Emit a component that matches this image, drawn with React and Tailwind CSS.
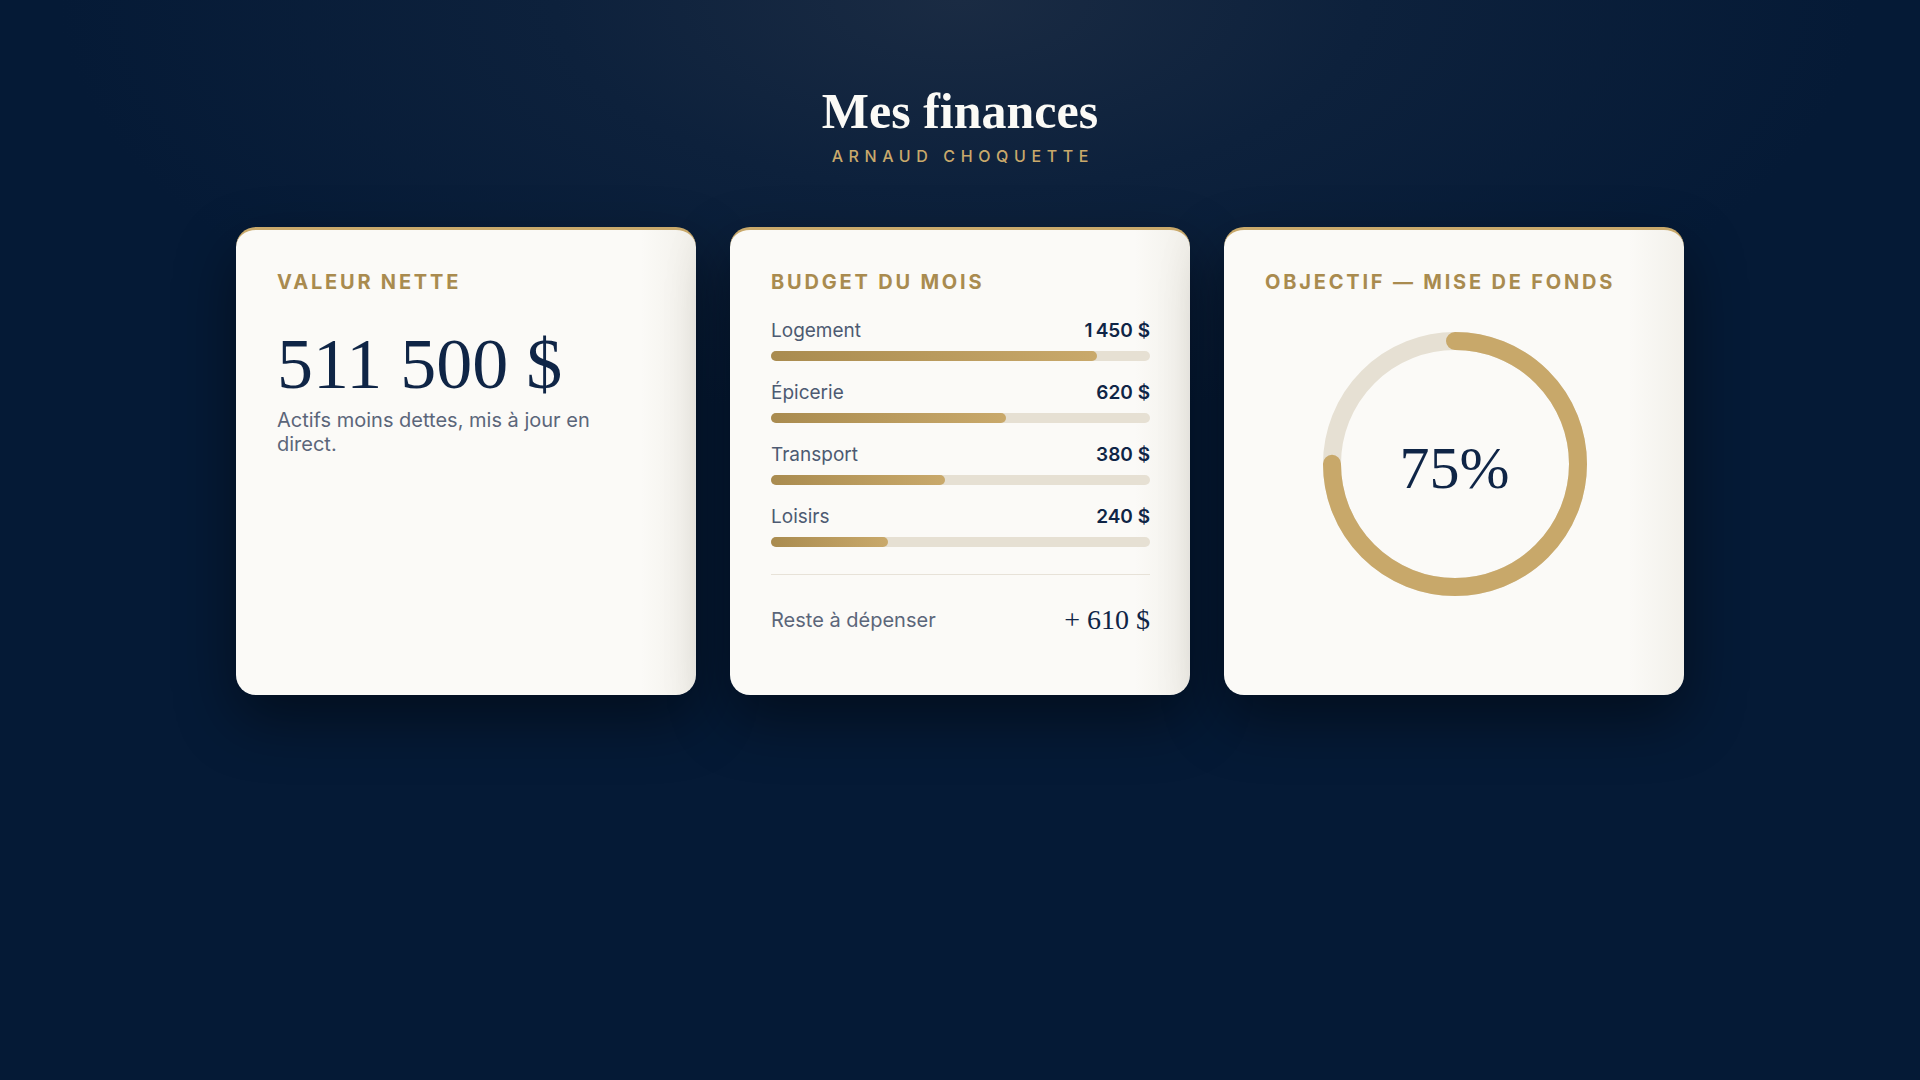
import React from "react";

const serif = { fontFamily: '"Liberation Serif", "DejaVu Serif", serif' };

const rows = [
  { name: "Logement", value: "1\u202f450\u00a0$", pct: 86 },
  { name: "Épicerie", value: "620\u00a0$", pct: 62 },
  { name: "Transport", value: "380\u00a0$", pct: 46 },
  { name: "Loisirs", value: "240\u00a0$", pct: 31 },
];

function Card({ title, children }) {
  return (
    <div className="min-h-[468px] rounded-[20px] border-t-[3px] border-[#c9a96b] bg-[linear-gradient(90deg,#fbfaf7_0%,#fbfaf7_88%,#f2f0ea_100%)] pl-[41px] pr-10 pt-[40px] pb-10 shadow-[0_24px_60px_rgba(0,0,0,0.45)]">
      <div className="text-[20px] leading-6 font-bold tracking-[0.14em] text-[#a98b4f]">
        {title}
      </div>
      {children}
    </div>
  );
}

function Donut({ pct }) {
  const r = 123;
  const c = 2 * Math.PI * r;
  return (
    <div className="relative mt-[38px] mx-auto w-[264px] h-[264px]">
      <svg width="264" height="264" viewBox="0 0 264 264" className="-rotate-90">
        <circle cx="132" cy="132" r={r} fill="none" stroke="#e6e0d3" strokeWidth="18" />
        <circle
          cx="132"
          cy="132"
          r={r}
          fill="none"
          stroke="#c8a86a"
          strokeWidth="18"
          strokeLinecap="round"
          strokeDasharray={`${(c * pct) / 100} ${c}`}
        />
      </svg>
      <div className="absolute inset-0 flex items-center justify-center">
        <span style={serif} className="text-[60px] leading-none text-[#0f2546] translate-y-[4px]">
          75%
        </span>
      </div>
    </div>
  );
}

export default function App() {
  return (
    <div
      className="min-h-screen w-full bg-[#051a36] bg-[radial-gradient(ellipse_900px_420px_at_50%_0%,#1a2b43_0%,#0d213c_45%,#051a36_100%)] pt-[81px] pb-20"
      style={{ fontFamily: 'Inter, "Liberation Sans", sans-serif' }}
    >
      <div className="flex flex-col items-center">
        <h1 style={serif} className="text-[50px] leading-[60px] font-bold text-[#fbfaf6]">
          Mes finances
        </h1>
        <div className="mt-[3px] text-[16px] leading-6 font-medium tracking-[0.35em] text-[#c9a96b] pl-[0.35em]">
          ARNAUD CHOQUETTE
        </div>
      </div>

      <div className="mx-auto mt-[59px] grid w-[1448px] grid-cols-3 gap-[34px]">
        <Card title="VALEUR NETTE">
          <div style={serif} className="mt-[30px] text-[72px] leading-[80px] text-[#0f2546]">
            511 500 $
          </div>
          <p className="mt-[4px] max-w-[350px] text-[20px] leading-[24px] text-[#5b667a]">
            Actifs moins dettes, mis à jour en direct.
          </p>
        </Card>

        <Card title="BUDGET DU MOIS">
          <div className="mt-[25px] flex flex-col gap-[20px]">
            {rows.map((r) => (
              <div key={r.name}>
                <div className="flex items-center justify-between text-[19px] leading-6">
                  <span className="text-[#4d5a72]">{r.name}</span>
                  <span className="font-semibold text-[#0f2546]">{r.value}</span>
                </div>
                <div className="mt-2 h-[10px] rounded-full bg-[#e6e0d3]">
                  <div
                    className="h-full rounded-full bg-[linear-gradient(90deg,#a98b4f,#c9a96b)]"
                    style={{ width: `${r.pct}%` }}
                  />
                </div>
              </div>
            ))}
          </div>
          <div className="mt-[27px] border-t border-[#e7e2d8] pt-[27px] flex items-center justify-between">
            <span className="text-[20px] leading-6 text-[#5b667a]">Reste à dépenser</span>
            <span style={serif} className="text-[28px] leading-9 text-[#0f2546]">
              + 610 $
            </span>
          </div>
        </Card>

        <Card title="OBJECTIF — MISE DE FONDS">
          <Donut pct={75} />
        </Card>
      </div>
    </div>
  );
}
